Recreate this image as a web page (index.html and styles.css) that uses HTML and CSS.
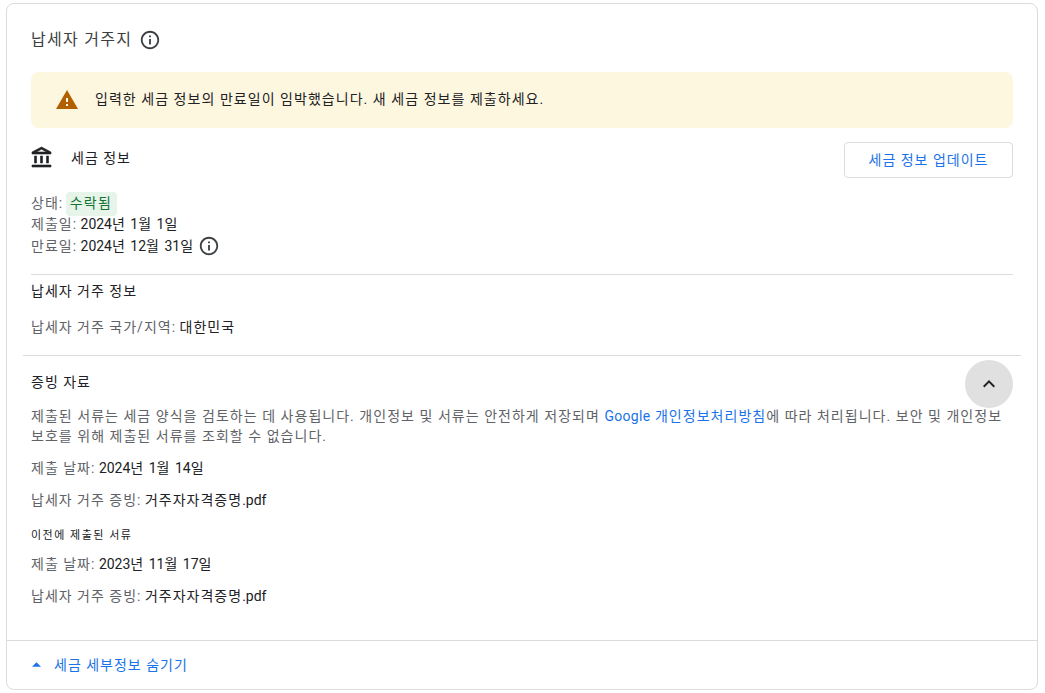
FILE: index.html
```html
<!DOCTYPE html>
<html lang="ko">
<head>
<meta charset="utf-8">
<title>납세자 거주지</title>
<link rel="stylesheet" href="styles.css">
</head>
<body>
<main class="card">
  <div class="body">
    <header class="title-row">
      <h1 class="title">납세자 거주지</h1>
      <svg class="info" viewBox="0 0 24 24"><path d="M11 7h2v2h-2zm0 4h2v6h-2zm1-9C6.48 2 2 6.48 2 12s4.48 10 10 10 10-4.48 10-10S17.52 2 12 2zm0 18c-4.41 0-8-3.59-8-8s3.59-8 8-8 8 3.59 8 8-3.59 8-8 8z"/></svg>
    </header>
    <div class="alert">
      <svg class="warn" viewBox="0 0 24 24"><path d="M1 21h22L12 2 1 21zm12-3h-2v-2h2v2zm0-4h-2v-4h2v4z"/></svg>
      <span class="alert-text">입력한 세금 정보의 만료일이 임박했습니다. 새 세금 정보를 제출하세요.</span>
    </div>
    <div class="tax-row">
      <div class="tax-head">
        <svg class="bank" viewBox="0 0 24 24"><path d="M6.500 10h-2v7h2v-7zm6 0h-2v7h2v-7zm8.500 9H2v2h19v-2zm-2.500-9h-2v7h2v-7zm-7-6.740L16.710 6H6.290l5.210-2.740m0-2.260L2 6v2h19V6l-9.500-5z"/></svg>
        <span class="tax-label">세금 정보</span>
      </div>
      <button class="update">세금 정보 업데이트</button>
    </div>
    <div class="status">
      <div class="status-line"><span class="key">상태:</span> <span class="chip">수락됨</span></div>
      <div class="status-line"><span class="key">제출일<span class="n">:</span></span> <span class="n">2024</span>년 <span class="n">1</span>월 <span class="n">1</span>일</div>
      <div class="status-line"><span class="key">만료일<span class="n">:</span></span> <span class="n">2024</span>년 <span class="n">12</span>월 <span class="n">31</span>일 <svg class="info info-inline" viewBox="0 0 24 24"><path d="M11 7h2v2h-2zm0 4h2v6h-2zm1-9C6.48 2 2 6.48 2 12s4.48 10 10 10 10-4.48 10-10S17.52 2 12 2zm0 18c-4.41 0-8-3.59-8-8s3.59-8 8-8 8 3.59 8 8-3.59 8-8 8z"/></svg></div>
    </div>
    <hr class="rule">
    <h2 class="section">납세자 거주 정보</h2>
    <p class="line residence"><span class="key">납세자 거주 국가/지역<span class="n">:</span></span> 대한민국</p>
  </div>
  <hr class="rule rule-wide">
  <div class="body docs">
    <button class="collapse" aria-label="접기">
      <svg viewBox="0 0 24 24"><path d="M7.410 15.410 12 10.830l4.590 4.580L18 14l-6-6-6 6z"/></svg>
    </button>
    <h2 class="section">증빙 자료</h2>
    <p class="desc">제출된 서류는 세금 양식을 검토하는 데 사용됩니다. 개인정보 및 서류는 안전하게 저장되며 <a href="#"><span class="brand">Google</span> 개인정보처리방침</a>에 따라 처리됩니다. 보안 및 개인정보 보호를 위해 제출된 서류를 조회할 수 없습니다.</p>
    <p class="line"><span class="key">제출 날짜<span class="n">:</span></span> <span class="n">2024</span>년 <span class="n">1</span>월 <span class="n">14</span>일</p>
    <p class="line"><span class="key">납세자 거주 증빙<span class="n">:</span></span> 거주자자격증명<span class="n">.pdf</span></p>
    <p class="small">이전에 제출된 서류</p>
    <p class="line"><span class="key">제출 날짜<span class="n">:</span></span> <span class="n">2023</span>년 <span class="n">11</span>월 <span class="n">17</span>일</p>
    <p class="line"><span class="key">납세자 거주 증빙<span class="n">:</span></span> 거주자자격증명<span class="n">.pdf</span></p>
  </div>
  <footer class="foot">
    <svg class="caret" viewBox="0 0 10 5"><path d="M0 5 5 0l5 5z"/></svg>
    <a href="#" class="foot-link">세금 세부정보 숨기기</a>
  </footer>
</main>
</body>
</html>
```
FILE: styles.css
```css
* { box-sizing: border-box; }
html, body { margin: 0; height: 100%; background: #fff; }
body {
  padding: 3px 7px 3px 6px;
  font-family: Roboto, "Noto Sans CJK KR", sans-serif;
  font-size: 14px;
  line-height: 20px;
  letter-spacing: 1px;
  color: #202124;
}
.n { letter-spacing: 0; }
.card {
  height: 687px;
  border: 1px solid #dadce0;
  border-radius: 8px;
  display: flex;
  flex-direction: column;
}
.body { padding: 0 24px; }
.title-row { display: flex; align-items: center; height: 32px; margin-top: 20px; gap: 7px; margin-bottom: -1px; }
.title { margin: 0; font-size: 16px; font-weight: 400; line-height: 24px; letter-spacing: 1.3px; color: #3c4043; }
.info { width: 22px; height: 22px; fill: #3c4043; flex: none; }
.alert {
  display: flex;
  align-items: center;
  height: 56px;
  margin-top: 17px;
  padding-left: 24px;
  gap: 16px;
  background: #fef7e0;
  border-radius: 8px;
  color: #202124;
  letter-spacing: 1.04px;
}
.alert-text { margin-bottom: 3px; }
.warn { width: 24px; height: 24px; fill: #b06000; flex: none; }
.tax-row { display: flex; justify-content: space-between; align-items: flex-start; margin-top: 14px; }
.tax-head { display: flex; align-items: center; height: 32px; }
.bank { width: 24px; height: 24px; fill: #202124; stroke: #202124; stroke-width: .6; flex: none; margin-left: -1px; }
.tax-label { margin-left: 17px; }
.update {
  width: 169px;
  height: 36px;
  border: 1px solid #dadce0;
  border-radius: 4px;
  background: #fff;
  color: #1a73e8;
  font: inherit;
  letter-spacing: 1px;
}
.status { margin-top: 13px; }
.status-line { height: 22px; line-height: 22px; }
.key { color: #5f6368; }
.chip { display: inline-block; position: relative; top: 1px; background: #e6f4ea; color: #137333; border-radius: 4px; padding: 0 3px 0 4px; height: 24px; line-height: 22px; width: 51px; margin-left: -2px; vertical-align: top; letter-spacing: 1.3px; }
.status-line:first-child .key { position: relative; top: 1px; }
.info-inline { width: 22px; height: 22px; margin-left: -1px; vertical-align: top; position: relative; top: 0; }
.rule { border: 0; border-top: 1px solid #dadce0; margin: 0; }
.status + .rule { margin-top: 17px; }
.rule-wide { margin: 18px 16px 0; }
.section { margin: 0; font-size: 14px; font-weight: 400; line-height: 20px; color: #202124; }
.rule + .section { margin-top: 6px; }
.line { margin: 12px 0 0; }
.residence { margin-top: 16px; }
.docs { position: relative; flex: 1; padding-top: 16px; }
.collapse {
  position: absolute;
  right: 24px;
  top: 4px;
  width: 48px;
  height: 48px;
  border: 0;
  border-radius: 50%;
  background: #e0e0e0;
  display: flex;
  align-items: center;
  justify-content: center;
  padding: 0;
}
.collapse svg { width: 24px; height: 24px; fill: #202124; }
.desc { margin: 14px 0 0; color: #5f6368; letter-spacing: 1.03px; }
.desc a { color: #1a73e8; text-decoration: none; }
.brand { letter-spacing: .3px; }
.small { margin: 18px 0 0; font-size: 11px; line-height: 16px; letter-spacing: 1.5px; color: #202124; }
.small + .line { margin-top: 10px; }
.foot {
  height: 49px;
  border-top: 1px solid #dadce0;
  display: flex;
  align-items: center;
  padding-left: 24px;
  gap: 13px;
}
.caret { width: 9px; height: 5px; fill: #1a73e8; margin-left: 1px; margin-top: -1px; }
.foot-link { color: #1a73e8; text-decoration: none; }
```
